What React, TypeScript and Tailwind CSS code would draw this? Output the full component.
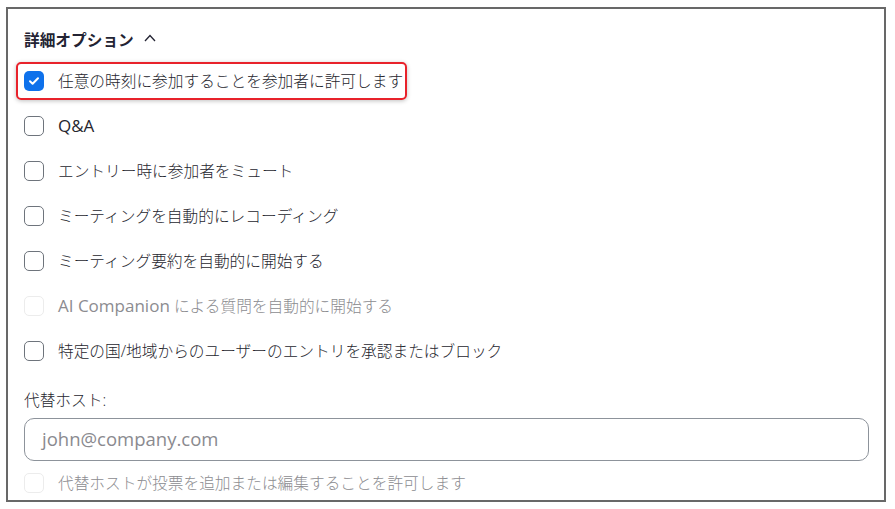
import React from "react";

const font = {
  fontFamily: '"Open Sans", "Noto Sans CJK JP", sans-serif',
};

type Opt = { label: React.ReactNode; key: string; checked?: boolean; disabled?: boolean; highlight?: boolean };

const options: Opt[] = [
  { key: "join", label: "任意の時刻に参加することを参加者に許可します", checked: true, highlight: true },
  { key: "qa", label: <span className="text-[17px] font-normal">Q&amp;A</span> },
  { key: "mute", label: "エントリー時に参加者をミュート" },
  { key: "rec", label: "ミーティングを自動的にレコーディング" },
  { key: "sum", label: "ミーティング要約を自動的に開始する" },
  {
    key: "ai",
    label: (
      <>
        <span className="text-[17px] font-normal">AI Companion</span> による質問を自動的に開始する
      </>
    ),
    disabled: true,
  },
  { key: "geo", label: "特定の国/地域からのユーザーのエントリを承認またはブロック" },
];

function Box({ checked, disabled }: { checked?: boolean; disabled?: boolean }) {
  if (checked) {
    return (
      <span className="flex h-5 w-5 shrink-0 items-center justify-center rounded-[5px] bg-[#0e71eb]">
        <svg width="12" height="12" viewBox="0 0 12 12" fill="none">
          <path d="M2 6.3l2.6 2.5L10 3.3" stroke="white" strokeWidth="2" strokeLinecap="round" strokeLinejoin="round" />
        </svg>
      </span>
    );
  }
  return (
    <span
      className={`h-5 w-5 shrink-0 rounded-[5px] border bg-white ${
        disabled ? "border-[#ececec]" : "border-[#6e747c]"
      }`}
    />
  );
}

function Row({ opt }: { opt: Opt }) {
  const inner = (
    <>
      <Box checked={opt.checked} disabled={opt.disabled} />
      <span className={`text-[15.7px] font-light leading-6 ${opt.disabled ? "text-[#8c8c90]" : "text-[#26262e]"}`}>
        {opt.label}
      </span>
    </>
  );
  return (
    <div className="flex h-[45px] items-center">
      {opt.highlight ? (
        <div className="-ml-2 flex h-[38px] items-center gap-[14px] rounded-[5px] border-2 border-[#e8222b] pl-[6px] pr-[2px] shadow-[0_1px_4px_rgba(0,0,0,0.25)]">
          {inner}
        </div>
      ) : (
        <div className="flex items-center gap-[14px]">{inner}</div>
      )}
    </div>
  );
}

export default function App() {
  return (
    <div className="h-[509px] w-[895px] bg-white pl-[6px] pt-[7px]" style={font}>
      <div className="h-[495px] w-[880px] overflow-hidden border-2 border-[#686868] pl-4 pr-[15px] pt-[19px]">
        <div className="flex h-6 items-center gap-[10px]">
          <span className="text-[15.7px] font-bold leading-6 text-[#232333]">詳細オプション</span>
          <svg width="12" height="8" viewBox="0 0 12 8" fill="none" className="-mt-1">
            <path d="M1 7l5-5.5L11 7" stroke="#232333" strokeWidth="1.3" />
          </svg>
        </div>
        <div className="mt-[6.5px] flex flex-col">
          {options.map((o) => (
            <Row key={o.key} opt={o} />
          ))}
        </div>
        <div className="mt-[14px] text-[15.7px] font-light leading-6 text-[#26262e]">代替ホスト:</div>
        <div className="mt-[6px] flex h-[43px] items-center rounded-[10px] border border-[#8d939b] pl-[17px]">
          <span className="text-[18.5px] text-[#8a8a8f]">john@company.com</span>
        </div>
        <div className="flex h-[45px] items-center gap-[14px]">
          <Box disabled />
          <span className="text-[15.7px] font-light leading-6 text-[#8c8c90]">代替ホストが投票を追加または編集することを許可します</span>
        </div>
      </div>
    </div>
  );
}
